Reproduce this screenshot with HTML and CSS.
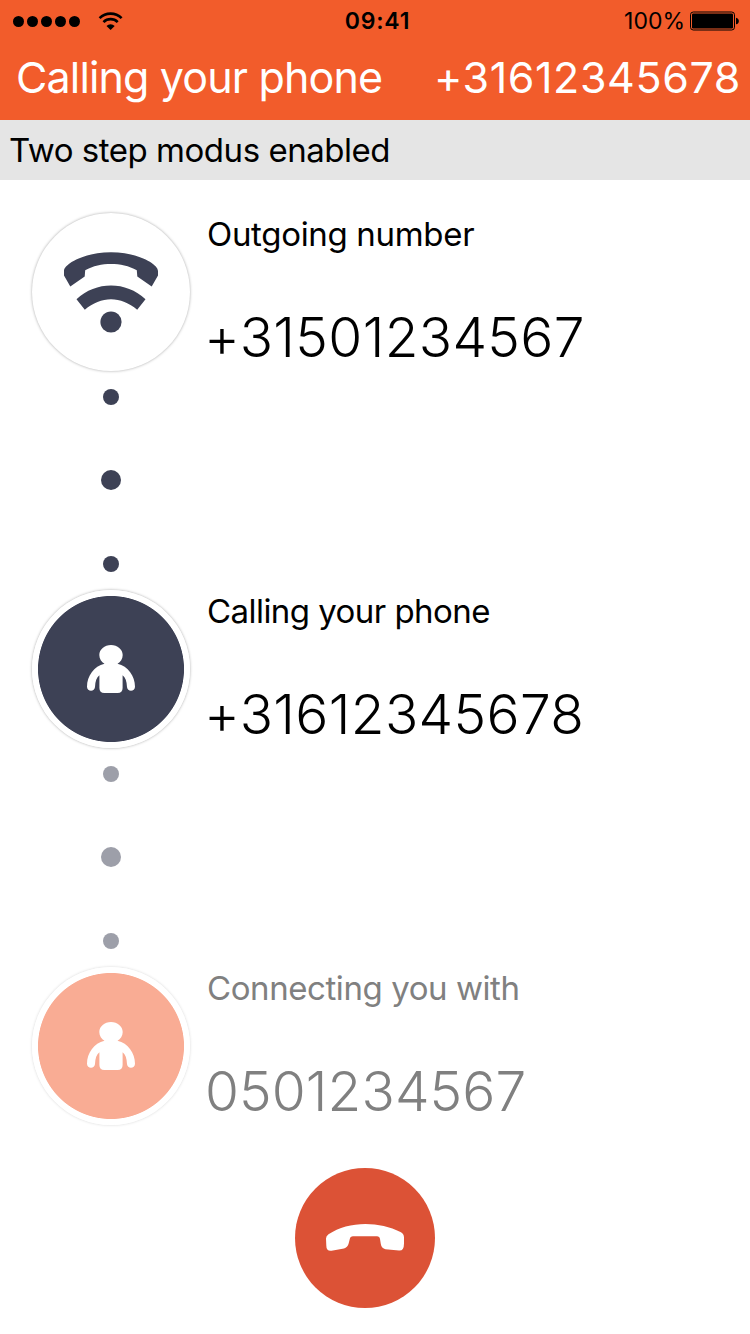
FILE: index.html
```html
<!DOCTYPE html>
<html lang="en">
<head>
<meta charset="utf-8">
<title>Calling your phone</title>
<link rel="stylesheet" href="styles.css">
</head>
<body>
<main class="screen">
  <header class="header">
    <div class="status">
      <div class="status-left">
        <div class="signal"><i></i><i></i><i></i><i></i><i></i></div>
        <svg class="wifi" width="26" height="20" viewBox="98 10 26 20">
          <path d="M99.6 17.1a15.9 15.9 0 0 1 22 0M103.5 21.1a10.2 10.2 0 0 1 14.2 0" fill="none" stroke="#000" stroke-width="2.7"/>
          <path d="M110.6 29l-4.1-4.1a6.2 6.2 0 0 1 8.2 0z"/>
        </svg>
      </div>
      <time class="clock">09:41</time>
      <div class="status-right">
        <span class="percent">100%</span>
        <svg class="battery" width="50" height="20" viewBox="0 0 50 20">
          <rect x=".5" y="1" width="44" height="18" rx="2.8" fill="none" stroke="#000"/>
          <rect x="2" y="2.5" width="41" height="15" rx="1.2"/>
          <path d="M46 6.7c3.8.5 3.8 6.1 0 6.6z"/>
        </svg>
      </div>
    </div>
    <div class="titlebar">
      <h1 class="title">Calling your phone</h1>
      <span class="title-number">+31612345678</span>
    </div>
  </header>
  <p class="notice"><span>Two step modus enabled</span></p>
  <section class="steps">
    <article class="step">
      <div class="rail">
        <div class="avatar">
          <svg width="158" height="158" viewBox="32 213 158 158" fill="#3d4155">
            <path d="M64 271C64 264 84 252.3 111 252.3C138 252.3 158 264 158 271V275.5L151.7 286.5L137.3 276.5L136.8 270.3C129 265.8 120 264 111 264C102 264 93 265.8 85.2 270.3L84.7 276.5L70.3 286.5L64 275.5Z"/>
            <path d="M76.5 299.3C96 281 126 281 145.5 299.3L137.2 309.8C121 295.7 101 295.7 84.8 309.8Z"/>
            <circle cx="111" cy="322" r="10.6"/>
          </svg>
        </div>
        <div class="dots"><i></i><i></i><i></i></div>
      </div>
      <div class="info">
        <h2 class="label label-outgoing">Outgoing number</h2>
        <p class="number">+31501234567</p>
      </div>
    </article>
    <article class="step">
      <div class="rail">
        <div class="avatar navy">
          <svg width="158" height="158" viewBox="32 590 158 158" fill="#fff">
            <path d="M111 645C117.5 645 122.7 649.5 122.7 655C122.7 659 120.5 662 117.5 663.8C128 666 135 676.5 135 686.7C135 692 127.2 692 127 687C126.7 681.5 125.5 677.5 122.6 675.3V688Q122.6 693 117.6 693H104.4Q99.4 693 99.4 688V675.3C96.5 677.5 95.3 681.5 95 687C94.8 692 87 692 87 686.7C87 676.5 94 666 104.5 663.8C101.5 662 99.3 659 99.3 655C99.3 649.5 104.5 645 111 645Z"/>
          </svg>
        </div>
        <div class="dots faded"><i></i><i></i><i></i></div>
      </div>
      <div class="info">
        <h2 class="label label-calling">Calling your phone</h2>
        <p class="number">+31612345678</p>
      </div>
    </article>
    <article class="step last">
      <div class="rail">
        <div class="avatar peach">
          <svg width="158" height="158" viewBox="32 590 158 158" fill="#fff">
            <path d="M111 645C117.5 645 122.7 649.5 122.7 655C122.7 659 120.5 662 117.5 663.8C128 666 135 676.5 135 686.7C135 692 127.2 692 127 687C126.7 681.5 125.5 677.5 122.6 675.3V688Q122.6 693 117.6 693H104.4Q99.4 693 99.4 688V675.3C96.5 677.5 95.3 681.5 95 687C94.8 692 87 692 87 686.7C87 676.5 94 666 104.5 663.8C101.5 662 99.3 659 99.3 655C99.3 649.5 104.5 645 111 645Z"/>
          </svg>
        </div>
      </div>
      <div class="info pending">
        <h2 class="label label-connecting">Connecting you with</h2>
        <p class="number number-local">0501234567</p>
      </div>
    </article>
  </section>
  <footer class="footer">
    <button class="hangup" type="button" aria-label="Hang up">
      <svg width="140" height="140" viewBox="295 1168 140 140" fill="#fff">
        <path d="M326 1238.5Q326 1236 328.5 1234.3C348 1220.8 379 1221 400.5 1232Q404 1233.8 404 1237.5V1243.5Q404 1251 399 1250.6L385.5 1249.2Q381.5 1248.2 380.8 1244L380 1239Q379.5 1236.2 377 1236.2H353Q350.3 1236.2 349.8 1239L348.5 1244Q347.5 1247.5 344 1248.4L331.5 1250.8Q326.3 1251.5 326.3 1245.5Z"/>
      </svg>
    </button>
  </footer>
</main>
</body>
</html>
```

FILE: styles.css
```css
* { box-sizing: border-box; }
body { margin: 0; }
h1, h2, p { margin: 0; font-weight: 400; }

.screen {
  width: 750px;
  height: 1334px;
  overflow: hidden;
  display: flex;
  flex-direction: column;
  background: #fff;
  color: #000;
  font-family: Inter, "Liberation Sans", sans-serif;
  white-space: nowrap;
}

.header { height: 120px; background: #f25c2b; }
.status {
  height: 40px;
  display: grid;
  grid-template-columns: 1fr auto 1fr;
  align-items: center;
  padding: 1px 10px 0 13px;
}
.status-left { display: flex; align-items: center; gap: 18px; }
.signal { display: flex; gap: 3px; }
.signal i { width: 11px; height: 11px; border-radius: 50%; background: #000; }
.wifi { display: block; }
.clock { padding-left: 2px; font-size: 23px; font-weight: 600; letter-spacing: .8px; line-height: 40px; }
.status-right { display: flex; justify-content: flex-end; align-items: center; gap: 5px; }
.percent { font-size: 23px; line-height: 40px; }
.battery { display: block; }

.titlebar {
  height: 80px;
  display: flex;
  justify-content: space-between;
  padding: 0 9px 0 16px;
  color: #fff;
  line-height: 74px;
}
.title { font-size: 43px; letter-spacing: -.85px; }
.title-number { font-size: 43px; letter-spacing: .6px; font-feature-settings: "calt" 0; }

.notice {
  height: 60px;
  padding-left: 9px;
  background: #e5e5e5;
  font-size: 33px;
  letter-spacing: -.47px;
  line-height: 60px;
}

.steps { padding: 33px 0 0 32px; }
.step { display: flex; gap: 16px; height: 377px; }
.step.last { height: 200px; }
.rail { width: 158px; display: flex; flex-direction: column; }
.avatar {
  width: 158px;
  height: 158px;
  border-radius: 50%;
  background: #fff;
  box-shadow: 0 0 3px rgba(0, 0, 0, .35);
}
.avatar svg { display: block; }
.navy { background: radial-gradient(circle, #3d4155 72.6px, #fff 73.4px); }
.peach {
  background: radial-gradient(circle, #f9ac94 72.6px, #fff 73.4px);
  box-shadow: 0 0 3px rgba(0, 0, 0, .17);
}
.dots {
  height: 183px;
  margin-top: 18px;
  display: flex;
  flex-direction: column;
  align-items: center;
  justify-content: space-between;
}
.dots i { width: 16px; height: 16px; border-radius: 50%; background: #3d4155; }
.dots i:nth-child(2) { width: 20px; height: 20px; margin-bottom: 1px; }
.dots.faded { opacity: .5; }

.info { display: flex; flex-direction: column; padding-left: 1px; }
.label { font-size: 33px; line-height: 42px; }
.label-outgoing { letter-spacing: -.32px; }
.label-calling { letter-spacing: -.55px; }
.label-connecting { letter-spacing: -.42px; }
.number {
  margin: 47px 0 0 -3px;
  font-size: 55px;
  font-weight: 300;
  font-feature-settings: "calt" 0;
  letter-spacing: .35px;
  line-height: 70px;
}
.number-local { margin-left: -2px; letter-spacing: .1px; }
.pending { color: #808080; }

.footer { display: flex; justify-content: center; padding-right: 20px; margin-top: 1px; }
.hangup {
  width: 140px;
  height: 140px;
  padding: 0;
  border: 0;
  border-radius: 50%;
  background: #dc5236;
}
.hangup svg { display: block; }
```
